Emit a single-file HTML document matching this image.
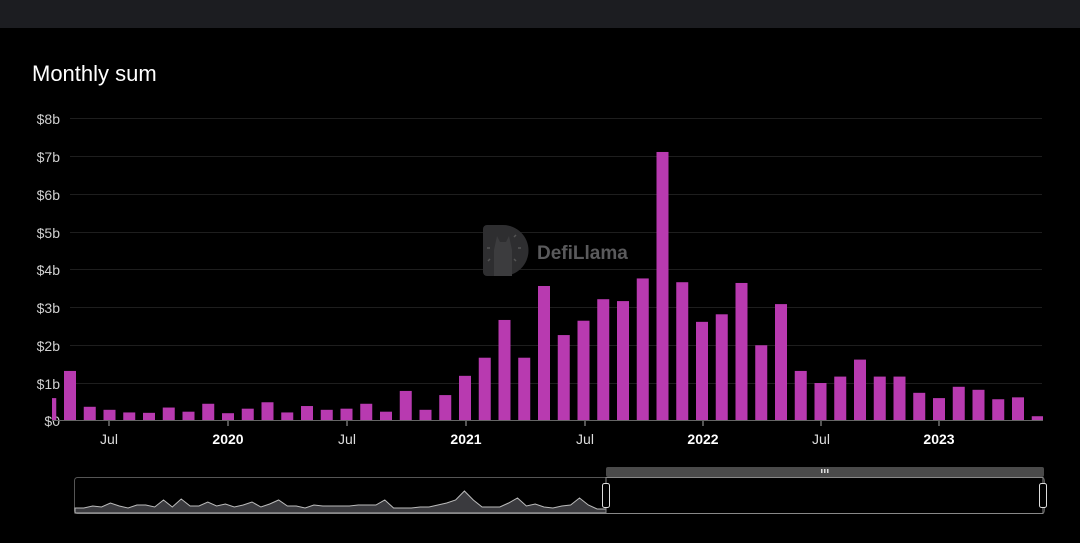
<!DOCTYPE html>
<html><head><meta charset="utf-8"><style>
html,body{margin:0;padding:0;background:#000;width:1080px;height:543px;overflow:hidden;font-family:"Liberation Sans",sans-serif}
</style></head><body>
<svg width="1080" height="543" xmlns="http://www.w3.org/2000/svg" style="position:absolute;left:0;top:0">
<rect x="0" y="0" width="1080" height="28" fill="#1c1d21"/>
<text x="32" y="81" fill="#fff" font-size="22" font-family="Liberation Sans, sans-serif">Monthly sum</text>
<g stroke="#1e1e1e" stroke-width="1">
<line x1="70" x2="1042" y1="118.5" y2="118.5"/><line x1="70" x2="1042" y1="156.5" y2="156.5"/>
<line x1="70" x2="1042" y1="194.5" y2="194.5"/><line x1="70" x2="1042" y1="232.5" y2="232.5"/>
<line x1="70" x2="1042" y1="269.5" y2="269.5"/><line x1="70" x2="1042" y1="307.5" y2="307.5"/>
<line x1="70" x2="1042" y1="345.5" y2="345.5"/><line x1="70" x2="1042" y1="383.5" y2="383.5"/>
</g>
<g fill="#d0d0d0" font-size="14" text-anchor="end" font-family="Liberation Sans, sans-serif">
<text x="60" y="124">$8b</text><text x="60" y="162">$7b</text><text x="60" y="200">$6b</text>
<text x="60" y="238">$5b</text><text x="60" y="275">$4b</text><text x="60" y="313">$3b</text>
<text x="60" y="351">$2b</text><text x="60" y="389">$1b</text><text x="60" y="426">$0</text>
</g>
<g>
<path d="M487,225 H503 A25,25 0 0 1 503,276 H487 A4,4 0 0 1 483,272 V229 A4,4 0 0 1 487,225 Z" fill="#2e2e30"/>
<path d="M494,276 V250 L497,236 L500,242 H506 L509,236 L512,250 V276 Z" fill="#3c3c3e"/>
<g stroke="#555" stroke-width="1.5"><line x1="487" y1="248" x2="490" y2="248"/><line x1="518" y1="248" x2="521" y2="248"/><line x1="514" y1="237" x2="516" y2="235"/><line x1="514" y1="259" x2="516" y2="261"/><line x1="490" y1="259" x2="488" y2="261"/></g>
<text x="537" y="259" fill="#5a5a5c" font-size="19" font-weight="bold" font-family="Liberation Sans, sans-serif">DefiLlama</text>
</g>
<g id="bars" fill="#b83ab0"></g>
<line x1="52" x2="1043" y1="420.5" y2="420.5" stroke="#666"/>
<g stroke="#aaa"><line x1="109" x2="109" y1="421" y2="426"/><line x1="228" x2="228" y1="421" y2="426"/><line x1="347" x2="347" y1="421" y2="426"/><line x1="466" x2="466" y1="421" y2="426"/><line x1="585" x2="585" y1="421" y2="426"/><line x1="703" x2="703" y1="421" y2="426"/><line x1="821" x2="821" y1="421" y2="426"/><line x1="939" x2="939" y1="421" y2="426"/></g>
<g fill="#ddd" font-size="14" text-anchor="middle" font-family="Liberation Sans, sans-serif">
<text x="109" y="444">Jul</text><text x="228" y="444" font-weight="bold" fill="#fff">2020</text>
<text x="347" y="444">Jul</text><text x="466" y="444" font-weight="bold" fill="#fff">2021</text>
<text x="585" y="444">Jul</text><text x="703" y="444" font-weight="bold" fill="#fff">2022</text>
<text x="821" y="444">Jul</text><text x="939" y="444" font-weight="bold" fill="#fff">2023</text>
</g>
<rect x="74.5" y="477.5" width="970" height="36" rx="3" fill="none" stroke="#555"/>
<path id="mini" fill="#3a3a3e" stroke="#bbb" stroke-width="1"/>
<rect x="606" y="467" width="438" height="10" rx="2" fill="#4a4a4a"/>
<g fill="#ddd"><rect x="821" y="469" width="1.5" height="4"/><rect x="824" y="469" width="1.5" height="4"/><rect x="827" y="469" width="1.5" height="4"/></g>
<rect x="606" y="477.5" width="437" height="36" fill="none" stroke="#888"/>
<rect x="602.5" y="483.5" width="7" height="24" rx="2" fill="#000" stroke="#ddd"/>
<rect x="1039.5" y="483.5" width="7" height="24" rx="2" fill="#000" stroke="#ddd"/>
</svg>
<script>
var v=[0.58,1.3,0.35,0.27,0.2,0.19,0.33,0.22,0.43,0.18,0.3,0.47,0.2,0.37,0.27,0.3,0.43,0.22,0.77,0.27,0.66,1.17,1.65,2.65,1.65,3.55,2.25,2.63,3.2,3.15,3.75,7.1,3.65,2.6,2.8,3.63,1.98,3.07,1.3,0.98,1.15,1.6,1.15,1.15,0.72,0.58,0.88,0.8,0.55,0.6,0.1];
var g=document.getElementById('bars'),s='';
for(var i=0;i<v.length;i++){var c=228+(i-9)*19.75,x=c-6,w=12;if(x<52){w-=52-x;x=52;}if(x+w>1043)w=1043-x;var h=v[i]*37.75;s+='<rect x="'+x+'" y="'+(420-h)+'" width="'+w+'" height="'+h+'"/>';}
g.innerHTML=s;
var m=[508,508,506,507,503,506,508,505,505,507,500,507,499,506,506,502,506,504,507,505,502,507,504,500,506,506,508,505,506,506,506,506,505,505,505,500,508,508,508,507,507,505,503,500,491,500,507,507,507,503,498,506,504,507,508,506,505,498,505,509,509];
var d='M75,513 ';for(var j=0;j<m.length;j++){d+='L'+(75+j*531/(m.length-1)).toFixed(1)+','+m[j]+' ';}d+='L606,513 Z';
document.getElementById('mini').setAttribute('d',d);
</script>
</body></html>
